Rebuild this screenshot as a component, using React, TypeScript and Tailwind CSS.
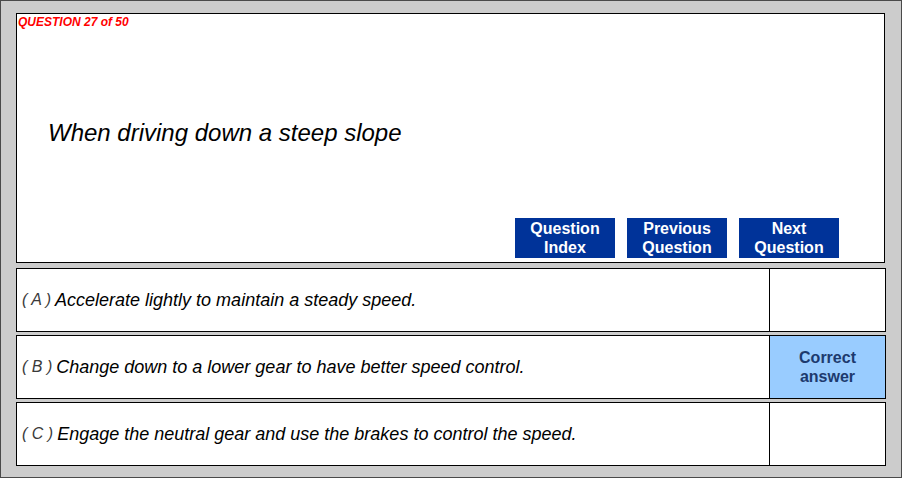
import React from "react";

const font = { fontFamily: '"Liberation Sans", Arial, sans-serif' };

function Option({ letter, text, correct }: { letter: string; text: string; correct?: boolean }) {
  return (
    <div className="flex h-[64px] w-[870px] border border-black bg-white">
      <div className="flex flex-1 items-center pl-[5px] italic text-[18px] text-black">
        <span className="mr-[4px] text-[16px] text-[#3a3a3a]">( {letter} )</span>
        <span>{text}</span>
      </div>
      <div
        className={`flex w-[116px] items-center justify-center border-l border-black text-center text-[16px] font-bold leading-[19px] text-[#1d3a6e] ${
          correct ? "bg-[#99ccff]" : "bg-white"
        }`}
      >
        {correct ? (
          <span>
            Correct
            <br />
            answer
          </span>
        ) : null}
      </div>
    </div>
  );
}

function NavButton({ l1, l2 }: { l1: string; l2: string }) {
  return (
    <div className="flex h-[40px] w-[100px] flex-col items-center justify-center bg-[#003399] text-[16px] font-bold leading-[19px] text-white">
      <span>{l1}</span>
      <span>{l2}</span>
    </div>
  );
}

export default function App() {
  return (
    <div style={font} className="h-[478px] w-[902px] border border-[#4a4a4a] bg-[#cccccc] pl-[15px] pt-[12px]">
      <div className="flex h-[250px] w-[869px] flex-col border border-black bg-white">
        <div className="pl-[1px] pt-[1px] text-[12px] font-bold italic leading-[14px] text-[#ff0000]">
          QUESTION 27 of 50
        </div>
        <div className="pl-[31px] pt-[90px] text-[24px] italic leading-[28px] text-black">
          When driving down a steep slope
        </div>
        <div className="mt-auto mb-[4px] flex justify-end gap-[12px] pr-[45px]">
          <NavButton l1="Question" l2="Index" />
          <NavButton l1="Previous" l2="Question" />
          <NavButton l1="Next" l2="Question" />
        </div>
      </div>
      <div className="mt-[5px] flex flex-col gap-[3px]">
        <Option letter="A" text="Accelerate lightly to maintain a steady speed." />
        <Option letter="B" text="Change down to a lower gear to have better speed control." correct />
        <Option letter="C" text="Engage the neutral gear and use the brakes to control the speed." />
      </div>
    </div>
  );
}
